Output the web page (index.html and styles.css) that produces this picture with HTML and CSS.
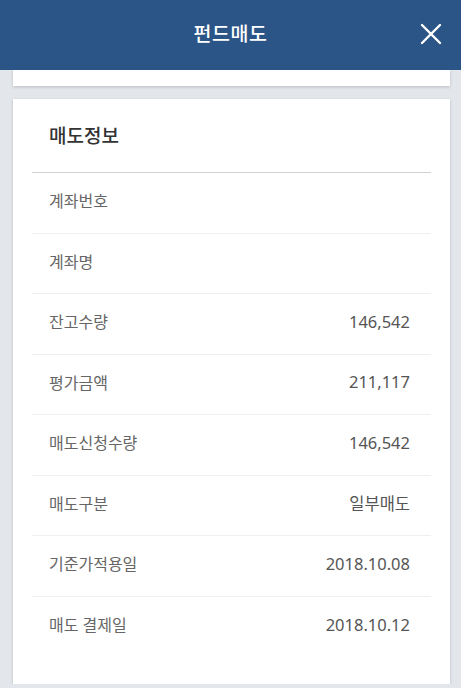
FILE: index.html
```html
<!DOCTYPE html>
<html lang="ko">
<head>
    <meta charset="UTF-8">
    <meta name="viewport" content="width=device-width, initial-scale=1.0">
    <title>펀드매도</title>
    <link rel="stylesheet" href="styles.css">
</head>
<body>

    <header class="top-bar">
        <h1 class="top-title">펀드매도</h1>
        <button class="close-btn" type="button" aria-label="닫기">
            <svg width="22" height="22" viewBox="0 0 22 22">
                <path d="M2 2 L20 20 M20 2 L2 20" stroke="#fff" stroke-width="2.4" stroke-linecap="round" fill="none"/>
            </svg>
        </button>
    </header>

    <main class="content">
        <div class="card card-stub"></div>

        <section class="card info-card">
            <h2 class="info-title">매도정보</h2>
            <ul class="info-list">
                <li class="info-row"><span class="label">계좌번호</span><span class="value"></span></li>
                <li class="info-row"><span class="label">계좌명</span><span class="value"></span></li>
                <li class="info-row"><span class="label">잔고수량</span><span class="value">146,542</span></li>
                <li class="info-row"><span class="label">평가금액</span><span class="value">211,117</span></li>
                <li class="info-row"><span class="label">매도신청수량</span><span class="value">146,542</span></li>
                <li class="info-row"><span class="label">매도구분</span><span class="value">일부매도</span></li>
                <li class="info-row"><span class="label">기준가적용일</span><span class="value">2018.10.08</span></li>
                <li class="info-row"><span class="label">매도 결제일</span><span class="value">2018.10.12</span></li>
            </ul>
        </section>
    </main>

</body>
</html>
```

FILE: styles.css
```css
body {
    margin: 0;
    font-family: "Noto Sans", "Noto Sans CJK KR", sans-serif;
    background-color: #e3e6ea;
    color: #333;
}

.top-bar {
    height: 70px;
    background-color: #2b5587;
    display: flex;
    align-items: center;
    justify-content: center;
    position: relative;
    padding-bottom: 5px;
    box-sizing: border-box;
}

.top-title {
    margin: 0;
    font-size: 19.5px;
    font-weight: 500;
    color: #fff;
    letter-spacing: 0.5px;
}

.close-btn {
    position: absolute;
    right: 19px;
    top: 23px;
    width: 22px;
    height: 22px;
    padding: 0;
    border: none;
    background: none;
    cursor: pointer;
}

.content {
    padding: 0 11px 0 13px;
}

.card {
    background-color: #fff;
    box-shadow: 0 1px 3px rgba(0, 0, 0, 0.18);
}

.card-stub {
    height: 16px;
    margin-bottom: 13px;
}

.info-card {
    padding: 0 19px 27px;
}

.info-title {
    margin: 0;
    height: 74px;
    padding: 0 0 2px 17px;
    box-sizing: border-box;
    display: flex;
    align-items: center;
    font-size: 19px;
    font-weight: 500;
    color: #333;
    border-bottom: 1px solid #cfd1d4;
}

.info-list {
    list-style: none;
    margin: 0;
    padding: 0;
}

.info-row {
    display: flex;
    justify-content: space-between;
    align-items: center;
    height: 60.5px;
    padding: 0 21px 5px 17px;
    box-sizing: border-box;
    border-bottom: 1px solid #eeeff0;
    font-size: 16px;
}

.info-row:last-child {
    border-bottom: none;
}

.label {
    color: #666;
}

.value {
    color: #555;
    font-size: 16.5px;
}
```
